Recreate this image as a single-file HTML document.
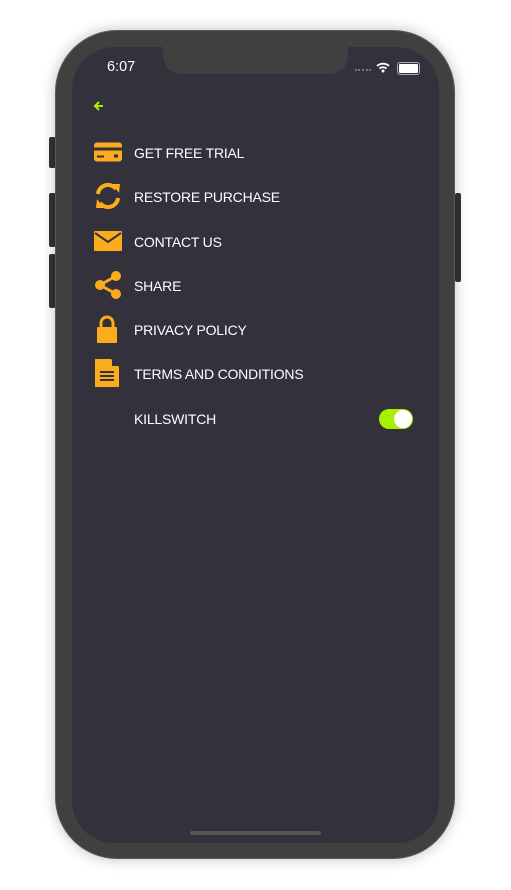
<!DOCTYPE html>
<html><head><style>
body{margin:0;width:511px;height:890px;background:#fff;position:relative;overflow:hidden;font-family:"Liberation Sans",sans-serif}
.phone{position:absolute;left:55px;top:30px;width:400px;height:829px;background:#404040;border-radius:62px;box-shadow:0 0 14px rgba(0,0,0,.25);border:1px solid #5a5a5a;box-sizing:border-box}
.btn{position:absolute;background:#333;border-radius:2px}
.screen{position:absolute;left:72px;top:47px;width:367px;height:796px;background:#33313b;border-radius:42px;overflow:hidden}
.notch{position:absolute;left:91px;top:-2px;width:185px;height:29px;background:#404040;border-radius:0 0 18px 18px}
.time{position:absolute;left:35px;top:12px;color:#fff;font-size:14.5px}
.row{position:absolute;left:62px;color:#fff;font-size:14px;transform:translateY(-50%);letter-spacing:-0.2px}
.ic{position:absolute;left:22px;transform:translateY(-50%)}
</style></head><body>
<div class="btn" style="left:49px;top:137px;width:7px;height:31px"></div>
<div class="btn" style="left:49px;top:193px;width:7px;height:54px"></div>
<div class="btn" style="left:49px;top:254px;width:7px;height:54px"></div>
<div class="btn" style="left:455px;top:193px;width:6px;height:89px"></div>
<div class="phone"></div>
<div class="screen">
<div class="notch"></div>
<div class="time">6:07</div>
<div style="position:absolute;left:283px;top:22px;width:16px;height:2px;border-top:2px dotted #777"></div>
<svg style="position:absolute;left:304px;top:15px" width="14" height="11" viewBox="0 0 14 11"><path d="M1 4a9 9 0 0 1 12 0M3.5 6.5a5.5 5.5 0 0 1 7 0" stroke="#fff" stroke-width="1.8" fill="none"/><circle cx="7" cy="9" r="1.5" fill="#fff"/></svg>
<div style="position:absolute;left:325px;top:15px;width:19px;height:9px;border:1px solid #aaa;border-radius:3px;padding:1px;box-sizing:content-box"><div style="width:19px;height:9px;background:#fff;border-radius:1px"></div></div>
<svg style="position:absolute;left:21px;top:53px" width="12" height="12" viewBox="0 0 12 12"><path d="M10 6H2M6 2L2 6l4 4" stroke="#a6f000" stroke-width="2" fill="none"/></svg>

<svg class="ic" style="top:105px" width="28" height="19" viewBox="0 0 28 19"><rect x="0" y="0" width="28" height="19" rx="3" fill="#fbac1c"/><rect x="0" y="5" width="28" height="3" fill="#33313b"/><rect x="3" y="13" width="7" height="2" fill="#33313b"/><rect x="20" y="12" width="4" height="3" fill="#33313b"/></svg>
<div class="row" style="top:106px">GET FREE TRIAL</div>

<svg class="ic" style="top:149px" width="28" height="28" viewBox="0 0 28 28"><path d="M4 12A10 10 0 0 1 22 7" stroke="#fbac1c" stroke-width="4" fill="none"/><path d="M18 2l8 0-1 9z" fill="#fbac1c"/><path d="M24 16A10 10 0 0 1 6 21" stroke="#fbac1c" stroke-width="4" fill="none"/><path d="M10 26l-8 0 1-9z" fill="#fbac1c"/></svg>
<div class="row" style="top:150px">RESTORE PURCHASE</div>

<svg class="ic" style="top:194px" width="28" height="20" viewBox="0 0 28 20"><rect width="28" height="20" rx="1" fill="#fbac1c"/><path d="M1 2l13 9 13-9" stroke="#33313b" stroke-width="2" fill="none"/></svg>
<div class="row" style="top:195px">CONTACT US</div>

<svg class="ic" style="top:238px" width="28" height="28" viewBox="0 0 28 28"><path d="M6 14L22 5M6 14l16 9" stroke="#fbac1c" stroke-width="3"/><circle cx="6" cy="14" r="5" fill="#fbac1c"/><circle cx="22" cy="5" r="5" fill="#fbac1c"/><circle cx="22" cy="23" r="5" fill="#fbac1c"/></svg>
<div class="row" style="top:239px">SHARE</div>

<svg class="ic" style="top:282px;left:25px" width="20" height="28" viewBox="0 0 20 28"><path d="M4 13V8a6 6 0 0 1 12 0v5" stroke="#fbac1c" stroke-width="3" fill="none"/><rect y="12" width="20" height="16" rx="1" fill="#fbac1c"/></svg>
<div class="row" style="top:283px">PRIVACY POLICY</div>

<svg class="ic" style="top:326px;left:23px" width="24" height="28" viewBox="0 0 24 28"><path d="M0 0h16l8 8v20H0z" fill="#fbac1c"/><path d="M17 0v7h7" fill="#33313b"/><path d="M5 13h14M5 17h14M5 21h14" stroke="#33313b" stroke-width="2"/></svg>
<div class="row" style="top:327px">TERMS AND CONDITIONS</div>

<div class="row" style="top:372px">KILLSWITCH</div>
<div style="position:absolute;left:307px;top:362px;width:34px;height:20px;border-radius:10px;background:#a6f000"><div style="position:absolute;right:1px;top:1px;width:18px;height:18px;border-radius:50%;background:#fff"></div></div>

<div style="position:absolute;left:118px;top:784px;width:131px;height:4px;border-radius:2px;background:#555"></div>
</div>
</body></html>
